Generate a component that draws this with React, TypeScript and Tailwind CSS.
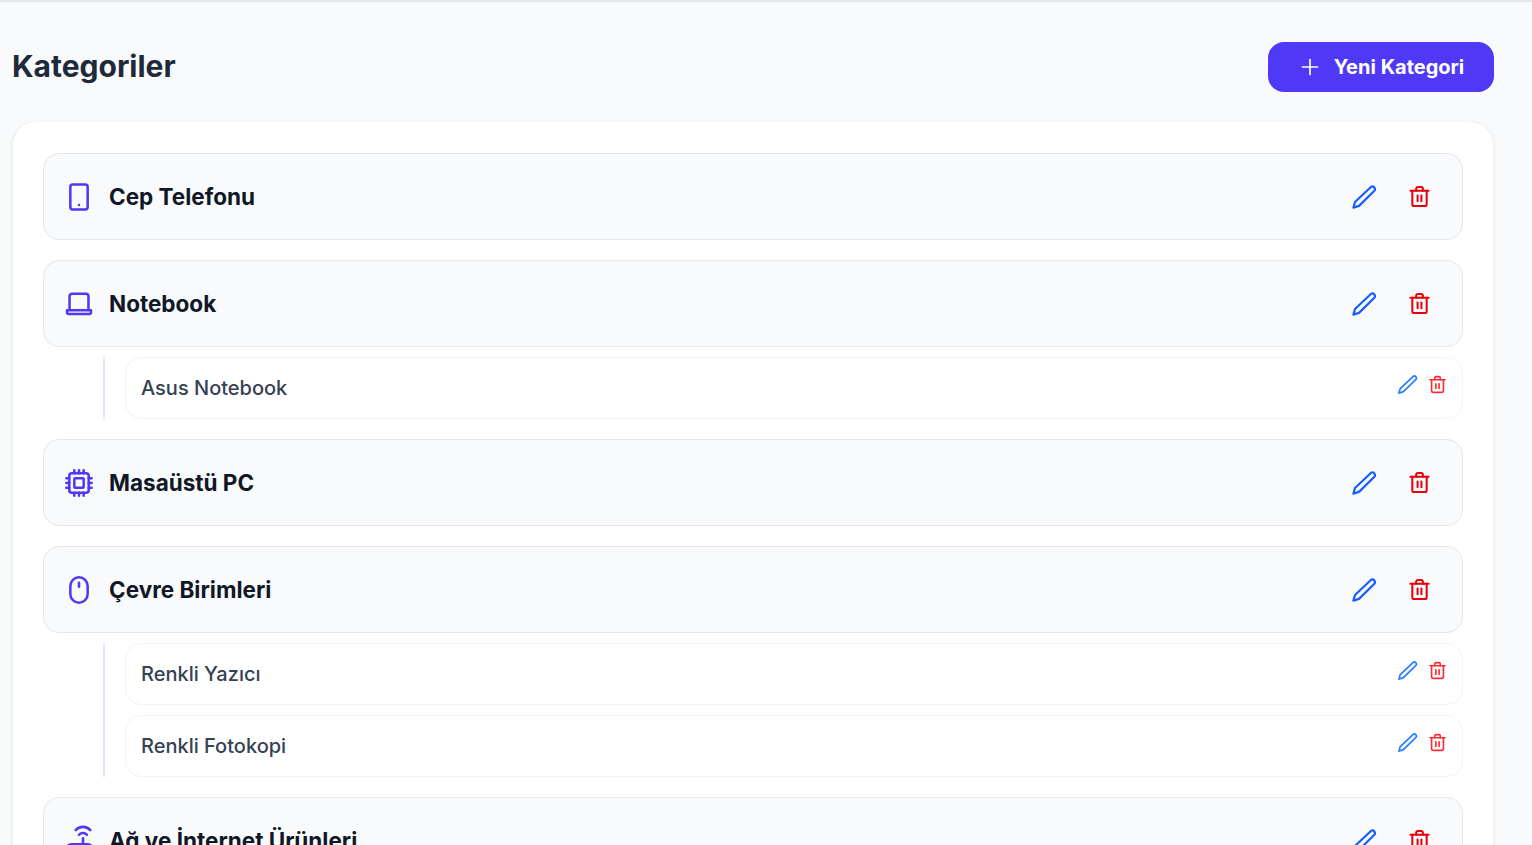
import React from "react";

const S = ({ className, children, w = 2 }: { className: string; children: React.ReactNode; w?: number }) => (
  <svg viewBox="0 0 24 24" fill="none" stroke="currentColor" strokeWidth={w} strokeLinecap="round" strokeLinejoin="round" className={className}>
    {children}
  </svg>
);

const Pencil = ({ className, w }: { className: string; w: number }) => (
  <S className={className} w={w}>
    <path d="M18.6 2.6a2.4 2.4 0 0 1 3 3.6L7.4 20.2 2.2 21.8l1.5-5.2z" />
  </S>
);

const Trash = ({ className, w }: { className: string; w: number }) => (
  <S className={className} w={w}>
    <path d="M2.5 6h19" />
    <path d="M8.5 6V3.8A1.8 1.8 0 0 1 10.3 2h3.4a1.8 1.8 0 0 1 1.8 1.8V6" />
    <path d="M4.5 6v14a2 2 0 0 0 2 2h11a2 2 0 0 0 2-2V6" />
    <path d="M10 11v6" />
    <path d="M14 11v6" />
  </S>
);

const iconCls = "w-8 h-8 text-[#4f39f6]";

const icons: Record<string, React.ReactNode> = {
  phone: (
    <S className={iconCls} w={1.9}>
      <rect x="5.5" y="2.7" width="13" height="18.6" rx="1.8" />
      <path d="M12 18h.01" />
    </S>
  ),
  laptop: (
    <S className={iconCls} w={1.9}>
      <path d="M4.9 16.5V6.3a2 2 0 0 1 2-2h10.2a2 2 0 0 1 2 2v10.2" />
      <path d="M3 16.7h18v1.5a1.3 1.3 0 0 1-1.3 1.3H4.3A1.3 1.3 0 0 1 3 18.2z" />
    </S>
  ),
  chip: (
    <S className={iconCls} w={1.9}>
      <rect x="4.7" y="4.7" width="14.6" height="14.6" rx="2" />
      <rect x="8.5" y="8.5" width="7" height="7" rx="0.5" />
      <path d="M8.5 2.5v2.2M12 2.5v2.2M15.5 2.5v2.2M8.5 19.3v2.2M12 19.3v2.2M15.5 19.3v2.2M2.5 8.5h2.2M2.5 12h2.2M2.5 15.5h2.2M19.3 8.5h2.2M19.3 12h2.2M19.3 15.5h2.2" />
    </S>
  ),
  mouse: (
    <S className={iconCls} w={1.9}>
      <rect x="5.5" y="2.5" width="13" height="19" rx="6.5" />
      <path d="M12 6.5v3" />
    </S>
  ),
  router: (
    <S className={iconCls} w={1.9}>
      <path d="M9.5 3.8a7.5 7.5 0 0 1 11 0" />
      <path d="M12 7.3a4 4 0 0 1 6 0" />
      <path d="M15 10v4" />
      <path d="M2.5 19a4 4 0 0 1 4-4.5h12a4 4 0 0 1 4 4.5v3h-20z" />
    </S>
  ),
};

const Row = ({ icon, name }: { icon: string; name: string }) => (
  <div className="h-[87px] shrink-0 rounded-2xl border border-[#e5e7eb] bg-[#f9fafb] pl-[19px] pr-[31px] flex items-center justify-between">
    <div className="flex items-center gap-[14px]">
      {icons[icon]}
      <span className="text-[22.5px] font-bold text-[#101828] leading-7 mt-px">{name}</span>
    </div>
    <div className="flex items-center gap-[31px] -mt-px">
      <Pencil className="w-[26px] h-[26px] text-[#155dfc] mt-[2px]" w={2} />
      <Trash className="w-[23px] h-[23px] text-[#e7000b]" w={2.1} />
    </div>
  </div>
);

const Sub = ({ name }: { name: string }) => (
  <div className="h-[62px] rounded-2xl border border-[#f3f4f6] bg-white pl-[15px] pr-[15px] flex items-center justify-between">
    <span className="text-xl font-medium text-[#364153]">{name}</span>
    <div className="flex items-center gap-[10px] -mt-[7px]">
      <Pencil className="w-[21px] h-[21px] text-[#2b7fff]" w={2} />
      <Trash className="w-[19px] h-[19px] text-[#fb2c36]" w={2.1} />
    </div>
  </div>
);

const Children = ({ items }: { items: string[] }) => (
  <div className="ml-[60px] mt-[10px] border-l-2 border-[#e0e7ff] pl-5 flex flex-col gap-[10px]">
    {items.map((n) => (
      <Sub key={n} name={n} />
    ))}
  </div>
);

export default function App() {
  return (
    <div className="h-[845px] overflow-hidden bg-[#f9fafb] border-t-2 border-[#e5e7eb] font-['Inter',sans-serif] pl-3 pr-[38px]">
      <div className="h-[120px] flex items-center justify-between pt-[10px]">
        <h1 className="text-[30px] font-bold text-[#1e2939] -mt-[2px]">Kategoriler</h1>
        <button className="w-[226px] h-[50px] rounded-2xl bg-[#4f39f6] text-white flex items-center justify-center gap-3 text-xl font-bold">
          <svg viewBox="0 0 24 24" fill="none" stroke="currentColor" strokeWidth={1.7} strokeLinecap="round" className="w-6 h-6">
            <path d="M12 4.5v15M4.5 12h15" />
          </svg>
          <span>Yeni Kategori</span>
        </button>
      </div>
      <div className="rounded-3xl border border-[#f3f4f6] bg-white p-[30px] shadow-sm h-[800px] flex flex-col -mt-px">
        <div className="flex flex-col mt-px">
          <Row icon="phone" name="Cep Telefonu" />
          <div className="mt-5">
            <Row icon="laptop" name="Notebook" />
            <Children items={["Asus Notebook"]} />
          </div>
          <div className="mt-5">
            <Row icon="chip" name="Masaüstü PC" />
          </div>
          <div className="mt-5">
            <Row icon="mouse" name="Çevre Birimleri" />
            <Children items={["Renkli Yazıcı", "Renkli Fotokopi"]} />
          </div>
          <div className="mt-5">
            <Row icon="router" name="Ağ ve İnternet Ürünleri" />
          </div>
        </div>
      </div>
    </div>
  );
}
